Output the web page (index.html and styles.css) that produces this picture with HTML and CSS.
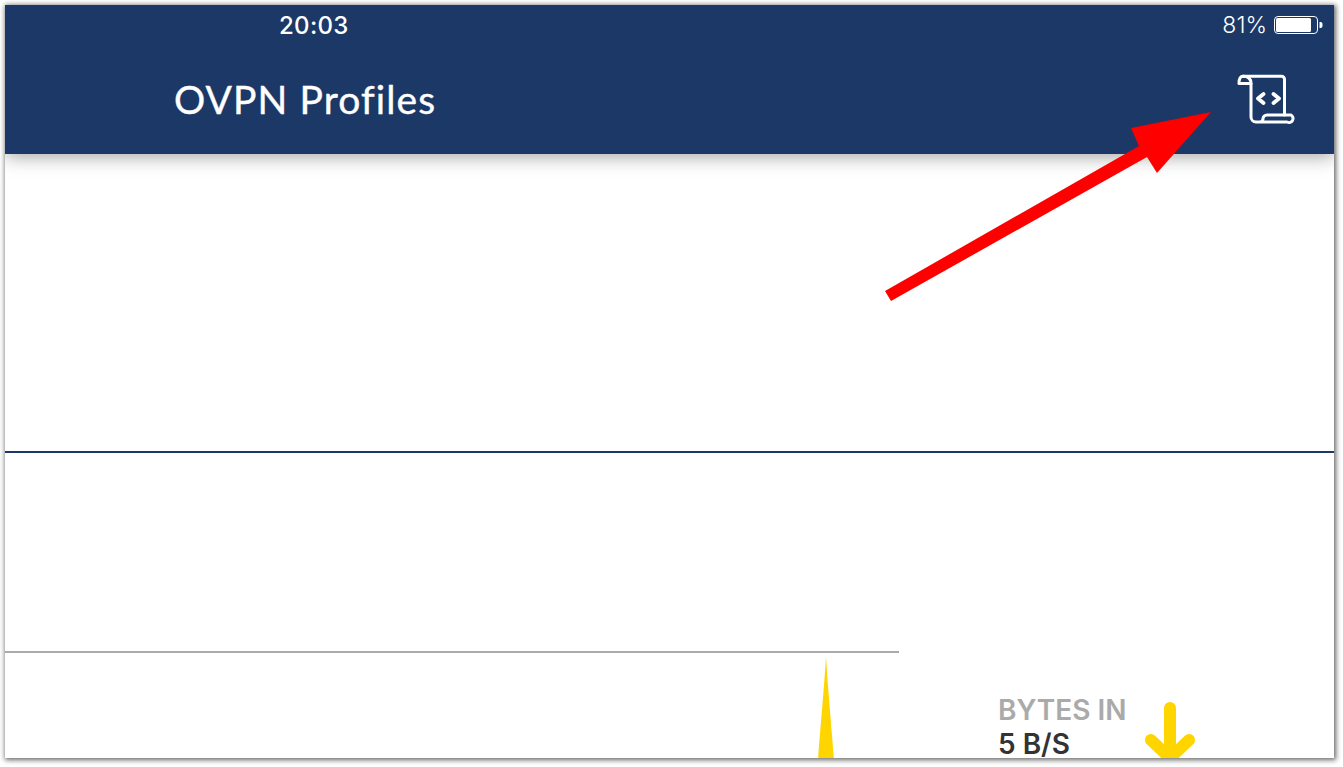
FILE: index.html
```html
<!DOCTYPE html>
<html lang="en">
<head>
<meta charset="utf-8">
<title>OVPN Profiles</title>
<link rel="stylesheet" href="styles.css">
</head>
<body>
<main class="frame">
  <header class="appbar">
    <div class="status">
      <span class="time">20:03</span>
      <div class="power">
        <span class="percent">81%</span>
        <svg class="battery" width="49" height="18" viewBox="0 0 49 18">
          <rect x="0.5" y="0.5" width="43" height="17" rx="3.5" fill="none" stroke="#fff"/>
          <rect x="2" y="2" width="35" height="14" rx="1.5" fill="#fff"/>
          <path d="M45.500 6h1a2 2 0 0 1 2 2v2a2 2 0 0 1-2 2h-1z" fill="#fff"/>
        </svg>
      </div>
    </div>
    <div class="titlebar">
      <h1 class="title">OVPN Profiles</h1>
      <svg class="script-icon" width="58" height="52" viewBox="0 0 58 52" fill="none" stroke="#fff" stroke-width="3" stroke-linejoin="round" stroke-linecap="round">
        <path d="M6 2.300H44.500a3 3 0 0 1 3 3V41"/>
        <path d="M6 2.300C3 2.300 2 6 2 9.500H14V43a5 5 0 0 0 5 5H50a4 4 0 0 0 4-7H30a4 4 0 0 0-4 4 3.500 3.500 0 0 1-3 3"/>
        <path d="M6 2.300C11 2.300 14 4 14 9.500"/>
        <path d="M26.500 20L21 24.500l5.500 4.500M36.500 20L42 24.500 36.500 29" stroke-width="3.800"/>
      </svg>
    </div>
  </header>
  <section class="pane-profiles"></section>
  <section class="pane-empty"></section>
  <section class="traffic">
    <div class="chart">
      <svg class="spike" width="24" height="104" viewBox="0 0 24 104">
        <path d="M12 0C10.500 28 6.500 70 4 104H20C17.500 70 13.500 28 12 0Z" fill="#ffd500"/>
      </svg>
    </div>
    <div class="stat">
      <div class="stat-text">
        <div class="stat-label">BYTES IN</div>
        <div class="stat-value">5 B/S</div>
      </div>
      <svg class="stat-arrow" width="50" height="60" viewBox="0 0 50 60" fill="none" stroke="#ffd500" stroke-width="12" stroke-linecap="round" stroke-linejoin="round">
        <path d="M25 6V50M6 38L25 56 44 38"/>
      </svg>
    </div>
  </section>
  <svg class="annotation" width="340" height="200" viewBox="0 0 340 200">
    <path d="M1206 107L1126 123 1134 141 880 286 886 296 1142 152 1152 168Z" transform="translate(-880 -100)" fill="#ff0000"/>
  </svg>
</main>
</body>
</html>
```
FILE: styles.css
```css
* { box-sizing: border-box; }
html, body { margin: 0; height: 100%; background: #fff; overflow: hidden; }
body { padding: 5px 9px 9px 5px; }
.frame {
  position: relative;
  display: flex;
  flex-direction: column;
  height: 753px;
  overflow: hidden;
  background: #fff;
  box-shadow: 1px 1px 5px 1px rgba(0, 0, 0, .6);
}
.appbar {
  flex: none;
  height: 149px;
  background: #1b3866;
  color: #fff;
  box-shadow: 0 2px 18px rgba(0, 0, 0, .38);
  position: relative;
  z-index: 1;
}
.status {
  display: flex;
  justify-content: space-between;
  align-items: center;
  height: 40px;
  padding: 0 11px 0 274px;
  font-family: Inter, sans-serif;
}
.time { font-size: 24px; font-weight: 500; letter-spacing: .3px; }
.power { display: flex; align-items: center; gap: 7px; }
.percent { font-size: 23px; font-weight: 300; }
.titlebar {
  display: flex;
  justify-content: space-between;
  align-items: center;
  height: 104px;
  padding: 0 39px 0 169px;
}
.title { margin: 4px 0 0; font: 400 39px Lato, sans-serif; letter-spacing: 1.1px; -webkit-text-stroke: .4px #fff; }
.script-icon { display: block; margin-top: 6px; }
.pane-profiles { flex: none; height: 299px; border-bottom: 2px solid #1b3866; }
.pane-empty { flex: none; height: 198px; }
.traffic { flex: 1; display: flex; min-height: 0; }
.chart {
  flex: none;
  width: 894px;
  border-top: 2px solid #aaa;
  padding: 3px 0 0 809px;
}
.spike { display: block; }
.stat { display: flex; gap: 18px; padding: 42px 0 0 99px; }
.stat-label, .stat-value { font: 600 28px/34px Inter, sans-serif; white-space: nowrap; }
.stat-label { color: #aaa; }
.stat-value { color: #333; }
.stat-arrow { display: block; flex: none; margin-top: 9px; }
.annotation { position: absolute; left: 880px; top: 100px; pointer-events: none; z-index: 2; }
```
